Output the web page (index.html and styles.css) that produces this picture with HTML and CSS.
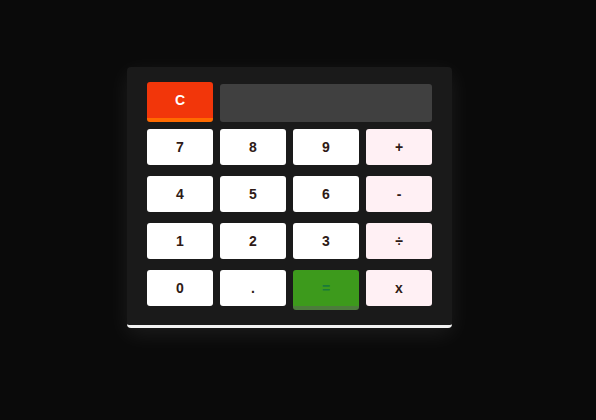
FILE: index.html
```html
<!DOCTYPE html>
<html>
<head>
<meta charset="utf-8">
<link rel="stylesheet" href="styles.css">
</head>
<body>
<div class="calc">
  <div class="grid">
    <button class="key clear">C</button>
    <div class="display"></div>
    <button class="key">7</button>
    <button class="key">8</button>
    <button class="key">9</button>
    <button class="key op">+</button>
    <button class="key">4</button>
    <button class="key">5</button>
    <button class="key">6</button>
    <button class="key op">-</button>
    <button class="key">1</button>
    <button class="key">2</button>
    <button class="key">3</button>
    <button class="key op">÷</button>
    <button class="key">0</button>
    <button class="key">.</button>
    <button class="key equals">=</button>
    <button class="key op">x</button>
  </div>
</div>
</body>
</html>
```
FILE: styles.css
```css
html, body {
  margin: 0;
  padding: 0;
  background: #0a0a0a;
  height: 100%;
}
body {
  padding: 67px 0 0 127px;
  box-sizing: border-box;
  font-family: "Liberation Sans", Arial, sans-serif;
}
.calc {
  width: 325px;
  box-sizing: border-box;
  padding: 15px 20px;
  background: #1a1a1a;
  border-bottom: 3px solid #f2f2f2;
  border-radius: 4px;
  box-shadow: 0 6px 22px rgba(255, 255, 255, 0.08);
}
.grid {
  display: grid;
  grid-template-columns: repeat(4, 66px);
  grid-auto-rows: 40px;
  gap: 7px;
}
.key {
  align-self: start;
  margin: 0;
  padding: 0;
  border: 0;
  border-radius: 3px;
  background: #ffffff;
  color: #2e1a16;
  font-family: "Liberation Sans", Arial, sans-serif;
  font-weight: bold;
  font-size: 14px;
  line-height: 36px;
  height: 36px;
  box-sizing: border-box;
}
.op {
  background: #fff0f4;
}
.clear {
  height: 40px;
  background: #f2360a;
  border-bottom: 4px solid #ff6a00;
  color: #ffffff;
}
.equals {
  height: 40px;
  background: #3d9a1c;
  border-bottom: 4px solid #4c7c3c;
  color: #1a7a3a;
}
.display {
  grid-column: span 3;
  margin-top: 2px;
  background: #404040;
  border-radius: 3px;
}
```
